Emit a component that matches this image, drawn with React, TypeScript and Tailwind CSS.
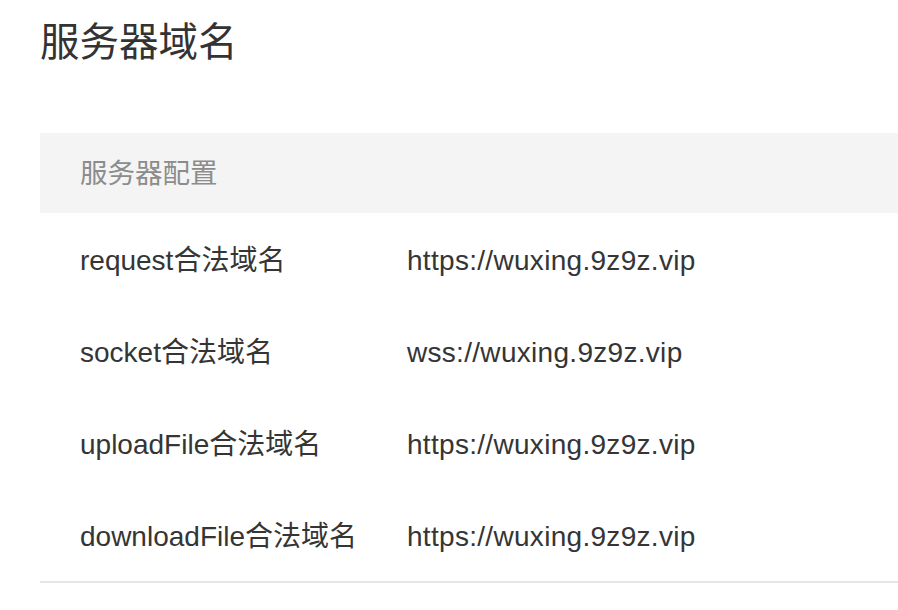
const ROWS = [
  { label: "request合法域名", value: "https://wuxing.9z9z.vip" },
  { label: "socket合法域名", value: "wss://wuxing.9z9z.vip" },
  { label: "uploadFile合法域名", value: "https://wuxing.9z9z.vip" },
  { label: "downloadFile合法域名", value: "https://wuxing.9z9z.vip" },
];

export default function App() {
  return (
    <div
      className="w-[898px] h-[610px] bg-white overflow-hidden pl-10"
      style={{ fontFamily: '"Liberation Sans", "Noto Sans CJK SC", sans-serif' }}
    >
      {/* Title */}
      <h1 className="pt-[18px] h-[133px] text-[39.5px] leading-[48px] text-[#333]">服务器域名</h1>

      {/* Table */}
      <div className="border-b-2 border-[#e6e6e6]">
        <div className="h-20 bg-[#f4f4f4] flex items-center pl-10 pt-0.5 text-[27.5px] text-[#8c8c8c]">
          服务器配置
        </div>
        {ROWS.map((row) => (
          <div key={row.label} className="h-[92px] flex items-center pl-10 pt-1 text-[28px] text-[#353535]">
            <div className="w-[327px]">{row.label}</div>
            <div className="tracking-[0.3px]">{row.value}</div>
          </div>
        ))}
      </div>
    </div>
  );
}
